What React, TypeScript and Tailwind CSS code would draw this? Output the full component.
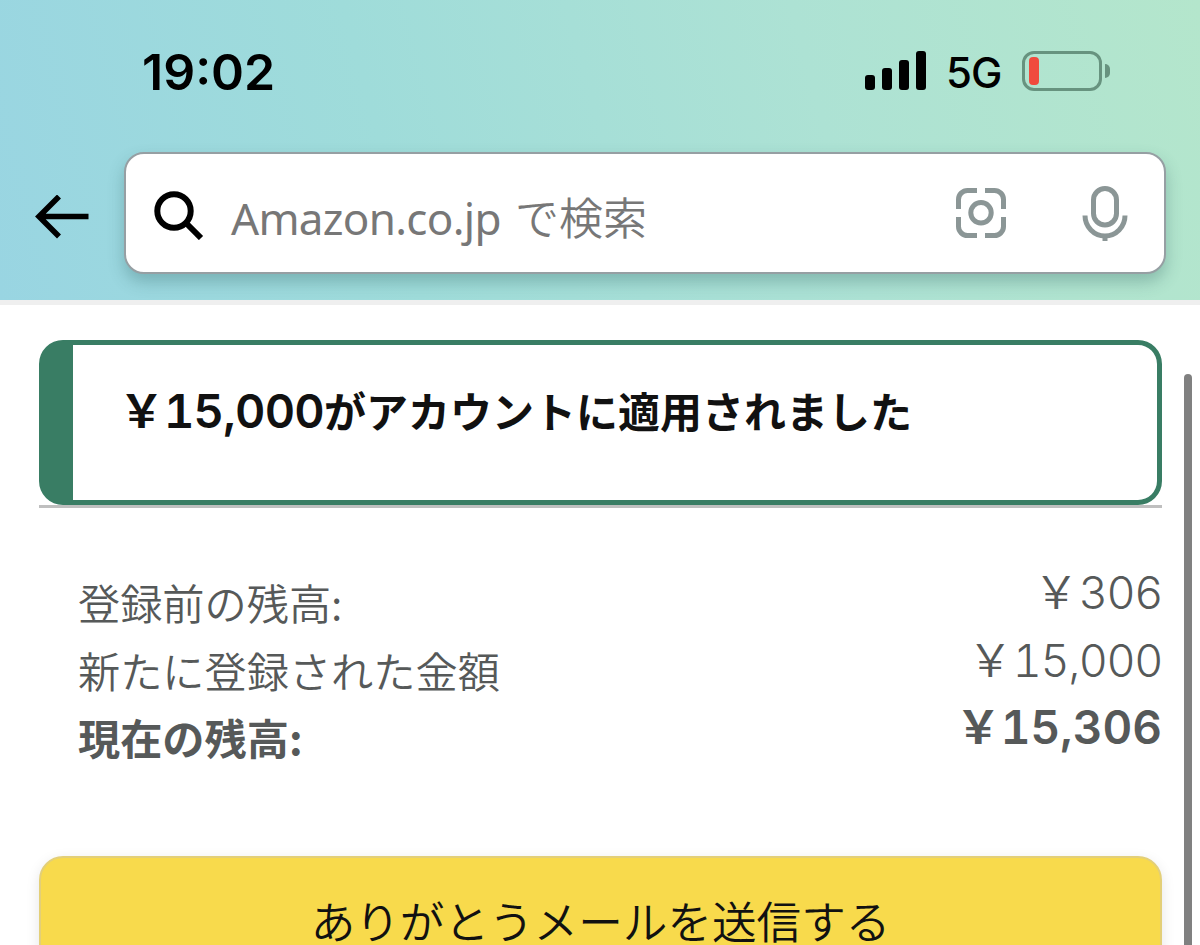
import React from "react";

interface BalanceRow {
  label: string;
  amount: string;
  bold?: boolean;
}

const balanceRows: BalanceRow[] = [
  { label: "登録前の残高:", amount: "306" },
  { label: "新たに登録された金額", amount: "15,000" },
  { label: "現在の残高:", amount: "15,306", bold: true },
];

const IconBack = () => (
  <svg viewBox="0 0 54 44" fill="none" stroke="#000" strokeWidth="5.6" className="w-[54px] h-11">
    <path d="M53.5 21.5H5M24 1.500 4 21.500l20 20" />
  </svg>
);

const IconSearch = () => (
  <svg viewBox="0 0 50 50" fill="none" stroke="#000" strokeWidth="6" className="w-[50px] h-[50px] mt-[3px]">
    <circle cx="20" cy="21" r="16.7" />
    <path d="M32 33 47 48" />
  </svg>
);

const IconScan = () => (
  <svg viewBox="0 0 50 50" fill="none" stroke="#8b9696" strokeWidth="5" className="w-[50px] h-[50px]">
    <path d="M2.5 21v-9.5a9 9 0 0 1 9-9H21M29 2.5h9.5a9 9 0 0 1 9 9V21M47.5 29v9.5a9 9 0 0 1-9 9H29M21 47.5h-9.5a9 9 0 0 1-9-9V29" />
    <circle cx="25" cy="24.7" r="10.2" />
  </svg>
);

const IconMic = () => (
  <svg viewBox="0 0 46 56" fill="none" stroke="#8b9696" strokeWidth="5" className="w-[46px] h-14">
    <rect x="11.5" y="3.5" width="23" height="36.5" rx="11.5" />
    <path d="M3 30.5a20 20.5 0 0 0 40 0M23 51v5" />
  </svg>
);

const StatusBar = () => (
  <div className="h-[152px] pt-[44px] pl-[142px] pr-[90px] flex items-start justify-between text-black">
    <span className="text-[50px] leading-[56px] font-semibold">19:02</span>
    <div className="flex items-center h-[54px]">
      <div className="flex items-end gap-[7px] h-[39px] -mt-px">
        <div className="w-[10px] h-[15px] rounded-[3px] bg-black" />
        <div className="w-[10px] h-[22px] rounded-[3px] bg-black" />
        <div className="w-[10px] h-[30px] rounded-[3px] bg-black" />
        <div className="w-[10px] h-[39px] rounded-[3px] bg-black" />
      </div>
      <span className="ml-5 w-[55px] text-[42px] leading-[54px] font-medium tracking-[-1px] pt-[4px]">5G</span>
      <div className="ml-[21px] w-20 h-10 rounded-xl border-3 border-[#67937f] p-[3px] pl-1">
        <div className="w-[10px] h-7 rounded-[4px] bg-[#f04b3e]" />
      </div>
      <div className="ml-[3px] w-[5px] h-[14px] rounded-r-full bg-[#67937f]" />
    </div>
  </div>
);

const SearchBar = () => (
  <div className="flex items-center pl-[35px] pr-[34px]">
    <div className="w-[89px] pt-[7px]">
      <IconBack />
    </div>
    <div className="flex-1 h-[122px] flex items-center bg-white rounded-[20px] border-2 border-[#969fa3] shadow-[0_8px_16px_rgba(40,90,90,0.3)] pl-[28px] pr-[36px]">
      <IconSearch />
      <div className="ml-[27px] flex items-baseline text-[#777] pt-[7px] whitespace-nowrap">
        <span className="w-[284px] text-[44px] leading-[60px] tracking-[-0.7px] font-['Noto_Sans',sans-serif]">Amazon.co.jp</span>
        <span className="text-[44px] leading-[60px] font-[350] font-['Noto_Sans_CJK_JP',sans-serif]">で検索</span>
      </div>
      <div className="ml-auto flex items-center gap-[76px]">
        <IconScan />
        <IconMic />
      </div>
    </div>
  </div>
);

export default function App() {
  return (
    <div className="relative w-[1200px] h-[945px] overflow-hidden bg-white font-['Inter','Noto_Sans_CJK_JP',sans-serif]">
      <header className="h-[305px] border-b-5 border-[#efefef] bg-[linear-gradient(75deg,#99d5e2_0%,#9fdcda_33%,#ade2d4_68%,#b4e6cc_100%)]">
        <StatusBar />
        <SearchBar />
      </header>

      <main className="pl-[39px] pr-[38px] pt-[35px]">
        <div className="border-b-3 border-[#bfbfbf]">
          <div className="h-[165px] rounded-[24px] border-[5px] border-l-[34px] border-[#397d64] pl-[46px] pt-[29px]">
            <h1 className="flex items-baseline text-[#111] font-bold text-[42px] leading-[70px] whitespace-nowrap">
              <span className="w-[45px] text-[45px] font-['Noto_Sans_CJK_JP',sans-serif]">￥</span>
              <span className="w-[160px] text-[47px] font-semibold tabular-nums tracking-[-0.8px]">15,000</span>
              <span className="font-['Noto_Sans_CJK_JP',sans-serif]">がアカウントに適用されました</span>
            </h1>
          </div>
        </div>

        <dl className="pt-[55px] pl-[39px] text-[#565959]">
          {balanceRows.map((row) => (
            <div
              key={row.label}
              className={`h-[67.5px] flex justify-between whitespace-nowrap ${row.bold ? "font-bold" : "font-[350]"}`}
            >
              <dt className="pt-[9px] text-[42.2px] leading-[60px] font-['Noto_Sans_CJK_JP',sans-serif]">{row.label}</dt>
              <dd className="flex items-baseline leading-[54px] tabular-nums">
                <span className="text-[45px] font-['Noto_Sans_CJK_JP',sans-serif]">￥</span>
                <span className={row.bold ? "text-[46px] font-semibold" : "text-[45px] font-[330] tracking-[-1.4px]"}>{row.amount}</span>
              </dd>
            </div>
          ))}
        </dl>

        <button className="mt-[90px] w-full h-[140px] pb-3 rounded-[24px] border-2 border-[#e3cf78] bg-[#f8da4c] shadow-[0_4px_14px_rgba(0,0,0,0.1)] text-[#111] text-[44.6px] leading-[44px] font-[350] font-['Noto_Sans_CJK_JP',sans-serif]">
          ありがとうメールを送信する
        </button>
      </main>

      {/* scroll indicator */}
      <div className="absolute left-[1184px] top-[374px] w-2 h-[600px] rounded-full bg-[#808080]" />
    </div>
  );
}
